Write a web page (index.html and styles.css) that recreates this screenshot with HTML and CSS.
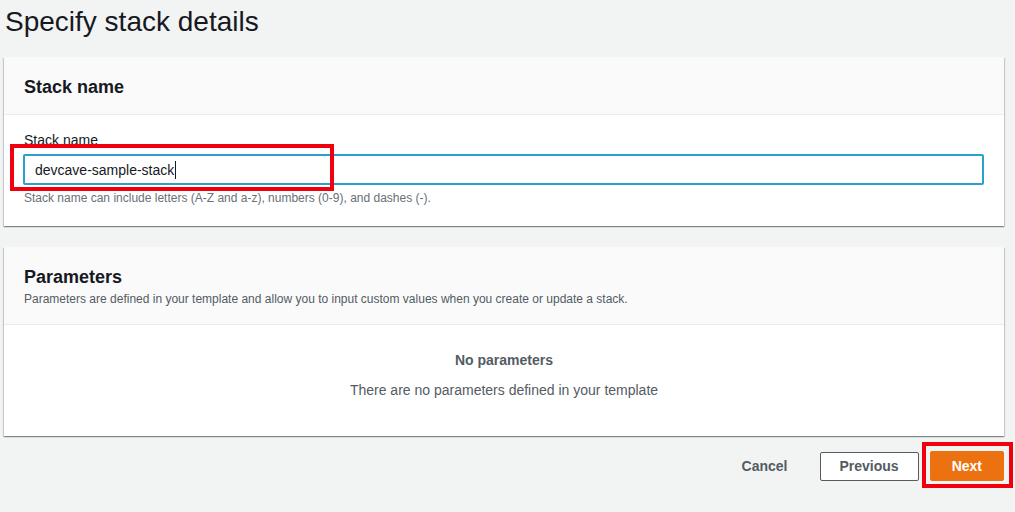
FILE: index.html
```html
<!DOCTYPE html>
<html>
<head>
<meta charset="utf-8">
<link rel="stylesheet" href="styles.css">
</head>
<body>
<div class="page">
  <h1 class="title">Specify stack details</h1>

  <section class="card">
    <div class="card-header">
      <h2 class="card-title">Stack name</h2>
    </div>
    <div class="card-body form-body">
      <label class="label">Stack name</label>
      <div class="input-wrap">
        <div class="input"><span class="value">devcave-sample-stack</span><span class="caret"></span></div>
        <div class="annot annot-input"></div>
      </div>
      <div class="hint">Stack name can include letters (A-Z and a-z), numbers (0-9), and dashes (-).</div>
    </div>
  </section>

  <section class="card">
    <div class="card-header">
      <h2 class="card-title">Parameters</h2>
      <div class="card-desc">Parameters are defined in your template and allow you to input custom values when you create or update a stack.</div>
    </div>
    <div class="card-body empty-body">
      <div class="empty-title">No parameters</div>
      <div class="empty-text">There are no parameters defined in your template</div>
    </div>
  </section>

  <div class="actions">
    <button class="btn btn-link">Cancel</button>
    <button class="btn btn-normal">Previous</button>
    <div class="next-wrap">
      <button class="btn btn-primary">Next</button>
      <div class="annot annot-next"></div>
    </div>
  </div>
</div>
</body>
</html>
```

FILE: styles.css
```css
* { box-sizing: border-box; }
html, body { margin: 0; padding: 0; }
body {
  background: #f2f3f3;
  font-family: "Liberation Sans", Arial, sans-serif;
  color: #16191f;
  width: 1015px;
  height: 512px;
  overflow: hidden;
}
.page {
  padding: 0 11px 0 4px;
}
.title {
  margin: 0;
  padding: 4px 0 0 1px;
  font-size: 28px;
  line-height: 36px;
  font-weight: 400;
  color: #16191f;
  height: 57px;
}
.card {
  background: #fff;
  box-shadow: 0 1px 1px 0 rgba(0,28,36,.3), 1px 1px 1px 0 rgba(0,28,36,.15), -1px 1px 1px 0 rgba(0,28,36,.15);
  margin-bottom: 21px;
}
.card-header {
  background: #fafafa;
  border-bottom: 1px solid #eaeded;
  padding: 20px 20px 17px 20px;
}
.card-title {
  margin: 0;
  font-size: 18px;
  line-height: 20px;
  font-weight: 700;
  color: #16191f;
}
.card-desc {
  margin-top: 4px;
  font-size: 12px;
  line-height: 16px;
  color: #545b64;
}
.card-body {
  height: 111px;
}
.form-body {
  padding: 15px 20px 0 19px;
}
.label {
  display: block;
  font-size: 14px;
  line-height: 20px;
  color: #16191f;
  padding-left: 1px;
}
.input-wrap {
  position: relative;
  margin-top: 4px;
}
.input {
  height: 31px;
  border: 2px solid #2ca0cc;
  border-radius: 2px;
  padding: 0 10px;
  display: flex;
  align-items: center;
  font-size: 14px;
  color: #16191f;
}
.caret {
  display: inline-block;
  width: 1px;
  height: 18px;
  background: #16191f;
  margin-left: 1px;
}
.hint {
  margin-top: 5px;
  font-size: 12px;
  line-height: 16px;
  color: #687078;
  padding-left: 1px;
}
.annot {
  position: absolute;
  border: 4px solid #f0000c;
  pointer-events: none;
}
.annot-input {
  left: -13px;
  top: -10px;
  width: 324px;
  height: 47px;
}
.empty-body {
  padding-top: 25px;
  text-align: center;
}
.empty-title {
  font-size: 14px;
  line-height: 20px;
  font-weight: 700;
  color: #545b64;
}
.empty-text {
  margin-top: 10px;
  font-size: 14px;
  line-height: 20px;
  color: #545b64;
}
.actions {
  display: flex;
  justify-content: flex-end;
  align-items: center;
  gap: 11px;
  margin-top: -6px;
}
.btn {
  font-family: "Liberation Sans", Arial, sans-serif;
  font-size: 14px;
  font-weight: 700;
  height: 30px;
  line-height: 20px;
  padding: 0 20px;
  border-radius: 2px;
  cursor: pointer;
  margin: 0;
}
.btn-link {
  background: transparent;
  border: 1px solid transparent;
  color: #545b64;
}
.btn-normal {
  background: #fff;
  border: 1px solid #545b64;
  color: #545b64;
  height: 29px;
  padding: 0 19px;
}
.next-wrap {
  position: relative;
}
.btn-primary {
  background: #ec7211;
  border: 1px solid #ec7211;
  color: #fff;
  display: block;
  padding: 0 21px;
}
.annot-next {
  left: -8px;
  top: -9px;
  width: 91px;
  height: 46px;
}
```
